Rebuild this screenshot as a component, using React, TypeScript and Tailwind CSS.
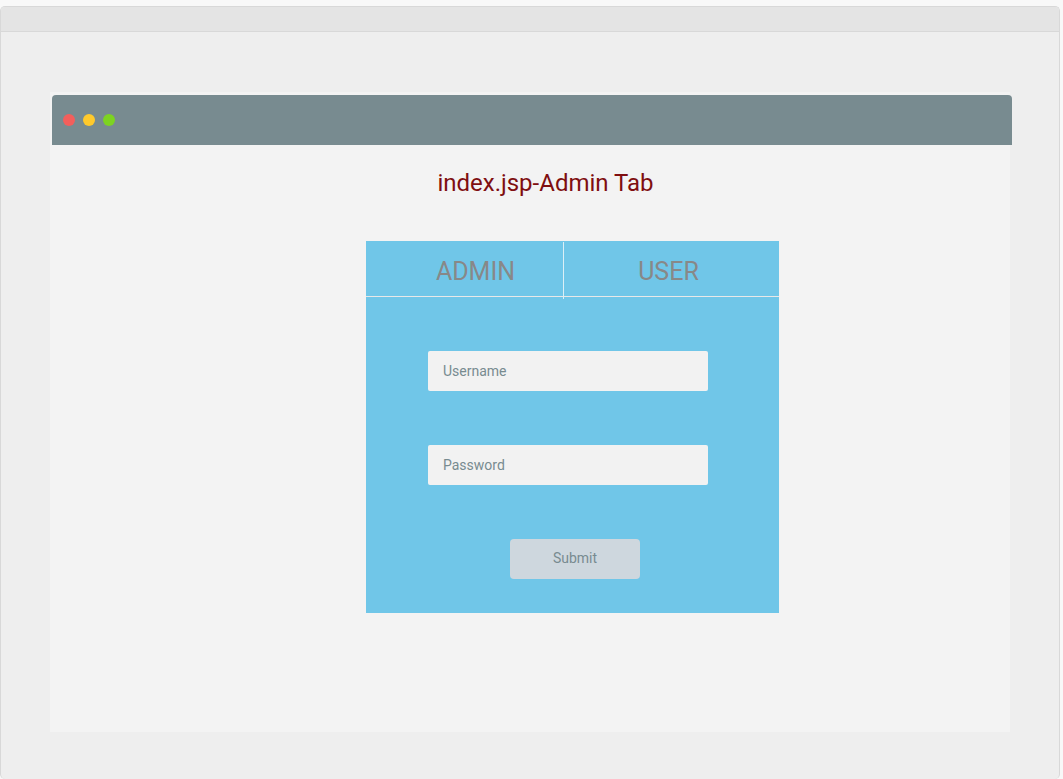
import { useState } from "react";
import type { FormEvent } from "react";

const dots = ["bg-[#f35f5c]", "bg-[#ffca2c]", "bg-[#7dd321]"];

function TitleBar() {
  return (
    <div className="ml-[2px] -mr-[2px] flex h-[50px] items-center gap-2 rounded-t-[4px] bg-[#788b90] pl-[11px]">
      {dots.map((dot) => (
        <span key={dot} className={`h-3 w-3 rounded-full ${dot}`} />
      ))}
    </div>
  );
}

function Field({ id, label, type }: { id: string; label: string; type: string }) {
  return (
    <input
      id={id}
      name={id}
      type={type}
      aria-label={label}
      placeholder={label}
      className="block h-10 w-full rounded-[2px] bg-[#f2f2f2] px-[15px] text-[14px] leading-5 text-[#5d6d71] placeholder:text-[#788b90] placeholder:opacity-100"
    />
  );
}

function LoginPanel() {
  const [tab, setTab] = useState("admin");
  const submit = (event: FormEvent) => event.preventDefault();

  return (
    <section className="w-[413px] bg-[#70c6e8]">
      <div role="tablist" className="flex h-14 border-b border-[#e8e8e8] text-[25px] leading-8 text-[#888888]">
        <button
          type="button"
          role="tab"
          aria-selected={tab === "admin"}
          onClick={() => setTab("admin")}
          className="w-[197px] pt-[6px] pl-[22px]"
        >
          ADMIN
        </button>
        <div className="mt-px h-[57px] w-px bg-[#dceff6]" />
        <button
          type="button"
          role="tab"
          aria-selected={tab === "user"}
          onClick={() => setTab("user")}
          className="flex-1 pt-[6px] pr-[6px]"
        >
          USER
        </button>
      </div>
      <form onSubmit={submit} className="ml-[62px] flex w-[280px] flex-col gap-[54px] pt-[54px] pb-[34px]">
        <Field id="username" label="Username" type="text" />
        <Field id="password" label="Password" type="password" />
        <button
          type="submit"
          className="ml-[82px] h-10 w-[130px] rounded-[4px] bg-[#ced7de] pb-[2px] text-[14px] leading-5 text-[#788b90]"
        >
          Submit
        </button>
      </form>
    </section>
  );
}

export default function App() {
  return (
    <div className="flex min-h-screen flex-col bg-[#f8f8f8] pt-[6px] pr-[3px] font-[Roboto,sans-serif]">
      <div className="flex flex-1 flex-col rounded-[5px] border border-b-0 border-[#d8d8d8] bg-[#eeeeee]">
        <div className="h-[25px] rounded-t-[4px] border-b border-[#d8d8d8] bg-[#e4e4e4]" />
        <main className="mx-[49px] mt-[60px] mb-[47px] flex-1 bg-[#f3f3f3] pt-[3px]">
          <TitleBar />
          <h1 className="pt-[22px] pl-[31px] text-center text-[24px] leading-8 text-[#7f0e10]">
            index.jsp-Admin Tab
          </h1>
          <div className="flex justify-center pt-[42px] pb-10 pl-[85px]">
            <LoginPanel />
          </div>
        </main>
      </div>
    </div>
  );
}
